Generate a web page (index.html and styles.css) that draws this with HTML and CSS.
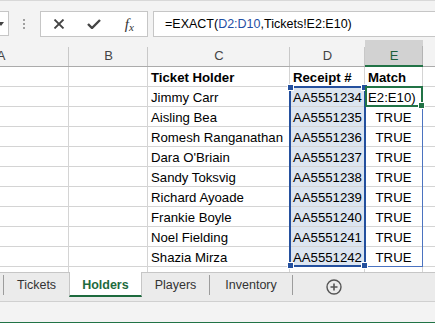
FILE: index.html
```html
<!DOCTYPE html>
<html lang="en">
<head>
    <meta charset="UTF-8">
    <meta name="viewport" content="width=device-width, initial-scale=1.0">
    <title>Holders - Excel</title>
    <link rel="stylesheet" href="styles.css">
</head>
<body>
    <!-- Formula bar -->
    <div class="formula-bar">
        <div class="name-box">
            <svg width="6" height="4" viewBox="0 0 6 4"><path d="M0 0 L6 0 L3 4 Z" fill="#444"/></svg>
        </div>
        <div class="grip"><span></span><span></span><span></span></div>
        <div class="fx-buttons">
            <span class="fx-btn">
                <svg width="12" height="10" viewBox="0 0 12 10"><path d="M1.5 0.5 L10.5 9.5 M10.5 0.5 L1.5 9.5" stroke="#444" stroke-width="1.8" fill="none"/></svg>
            </span>
            <span class="fx-btn">
                <svg width="14" height="10" viewBox="0 0 14 10"><path d="M1 5 L5 9 L13 1" stroke="#444" stroke-width="2.4" fill="none"/></svg>
            </span>
            <span class="fx-btn fx-label"><i>f</i><span>x</span></span>
        </div>
        <div class="formula-input">=EXACT(<span class="ref-text">D2:D10</span>,Tickets!E2:E10)</div>
    </div>

    <!-- Sheet grid -->
    <div class="sheet">
        <div class="hd">A</div>
        <div class="hd">B</div>
        <div class="hd">C</div>
        <div class="hd">D</div>
        <div class="hd sel">E</div>
        <div class="hd"></div>

        <div class="c"></div><div class="c"></div><div class="c b">Ticket Holder</div><div class="c b">Receipt #</div><div class="c b">Match</div><div class="c"></div>
        <div class="c"></div><div class="c"></div><div class="c">Jimmy Carr</div><div class="c ref">AA5551234</div><div class="c">E2:E10)</div><div class="c"></div>
        <div class="c"></div><div class="c"></div><div class="c">Aisling Bea</div><div class="c ref">AA5551235</div><div class="c ctr">TRUE</div><div class="c"></div>
        <div class="c"></div><div class="c"></div><div class="c">Romesh Ranganathan</div><div class="c ref">AA5551236</div><div class="c ctr">TRUE</div><div class="c"></div>
        <div class="c"></div><div class="c"></div><div class="c">Dara O'Briain</div><div class="c ref">AA5551237</div><div class="c ctr">TRUE</div><div class="c"></div>
        <div class="c"></div><div class="c"></div><div class="c">Sandy Toksvig</div><div class="c ref">AA5551238</div><div class="c ctr">TRUE</div><div class="c"></div>
        <div class="c"></div><div class="c"></div><div class="c">Richard Ayoade</div><div class="c ref">AA5551239</div><div class="c ctr">TRUE</div><div class="c"></div>
        <div class="c"></div><div class="c"></div><div class="c">Frankie Boyle</div><div class="c ref">AA5551240</div><div class="c ctr">TRUE</div><div class="c"></div>
        <div class="c"></div><div class="c"></div><div class="c">Noel Fielding</div><div class="c ref">AA5551241</div><div class="c ctr">TRUE</div><div class="c"></div>
        <div class="c"></div><div class="c"></div><div class="c">Shazia Mirza</div><div class="c ref">AA5551242</div><div class="c ctr">TRUE</div><div class="c"></div>
        <div class="c"></div><div class="c"></div><div class="c"></div><div class="c"></div><div class="c"></div><div class="c"></div>

        <!-- Range outlines drawn over the cells -->
        <div class="range-outline"></div>
        <div class="ref-range">
            <span class="handle tl"></span><span class="handle tr"></span>
            <span class="handle bl"></span><span class="handle br"></span>
        </div>
        <div class="active-cell"><span class="fill-handle"></span></div>
    </div>

    <!-- Sheet tabs -->
    <div class="tabs">
        <div class="tab first">Tickets</div>
        <div class="tab active">Holders</div>
        <div class="tab">Players</div>
        <div class="tab wide">Inventory</div>
        <div class="add-sheet">
            <svg width="16" height="16" viewBox="0 0 16 16"><circle cx="8" cy="8" r="7" stroke="#555" stroke-width="1.4" fill="none"/><path d="M8 4.5 V11.5 M4.5 8 H11.5" stroke="#555" stroke-width="1.6"/></svg>
        </div>
    </div>

    <div class="status-bar"></div>
</body>
</html>
```

FILE: styles.css
```css
/* Excel-like sheet view */
body {
    margin: 0;
    width: 435px;
    height: 323px;
    overflow: hidden;
    background: #fff;
    font-family: "Liberation Sans", Arial, sans-serif;
    color: #000;
}

/* ---- formula bar ---- */
.formula-bar {
    display: flex;
    align-items: flex-start;
    height: 40px;
    padding-top: 11px;
    box-sizing: border-box;
    background: #f3f3f3;
    border-top: 1px solid #d8d8d8;
}

.name-box {
    width: 9px;
    height: 25px;
    box-sizing: border-box;
    margin-top: -1px;
    background: #fff;
    border: 1px solid #c6c6c6;
    border-left: none;
    display: flex;
    align-items: center;
}

.name-box svg {
    margin-left: -2px;
}

.grip {
    display: flex;
    flex-direction: column;
    gap: 2px;
    margin: 7px 0 0 14px;
}

.grip span {
    width: 2px;
    height: 2px;
    background: #a0a0a0;
}

.fx-buttons {
    display: flex;
    width: 108px;
    height: 26px;
    box-sizing: border-box;
    margin-top: -1px;
    margin-left: 15px;
    background: #fff;
    border: 1px solid #c6c6c6;
}

.fx-btn {
    flex: 1;
    display: flex;
    align-items: center;
    justify-content: center;
}

.fx-label {
    font-family: "Liberation Serif", serif;
    color: #333;
    font-size: 15px;
    padding-top: 1px;
}

.fx-label span {
    font-size: 11px;
    font-style: italic;
    margin-top: 4px;
}

.formula-input {
    flex: 1;
    height: 26px;
    box-sizing: border-box;
    margin-top: -1px;
    margin-left: 5px;
    margin-right: -2px;
    padding: 5px 0 0 11px;
    background: #fff;
    border: 1px solid #c6c6c6;
    font-size: 12.5px;
    white-space: nowrap;
}

.ref-text {
    color: #1f4ea3;
}

/* ---- grid ---- */
.sheet {
    position: relative;
    display: grid;
    grid-template-columns: 136px 79px 142px 75px 58px 100px;
    grid-template-rows: 27px repeat(11, 20px);
    height: 232px;
    margin-left: -67px;
    overflow: hidden;
}

.hd {
    box-sizing: border-box;
    padding-top: 6px;
    line-height: 20px;
    text-align: center;
    font-size: 13px;
    color: #444;
    background: linear-gradient(#c8c8c8, #c8c8c8) right bottom / 1px 19px no-repeat, #f3f3f3;
    border-bottom: 1px solid #ababab;
}

.hd.sel {
    background: linear-gradient(#b4b4b4, #b4b4b4) right bottom / 1px 19px no-repeat, #d2d2d2;
    color: #1d5e3b;
    border-bottom: 2px solid #217346;
}

.c {
    box-sizing: border-box;
    padding: 3px 3px 0;
    line-height: 16px;
    font-size: 13.2px;
    white-space: nowrap;
    overflow: hidden;
    border-right: 1px solid #d4d4d4;
    border-bottom: 1px solid #d4d4d4;
}

.c.b {
    font-weight: bold;
}

.c.ctr {
    text-align: center;
}

.c.ref {
    background: #dce5f0;
}

.range-outline {
    position: absolute;
    grid-column: 5 / 6;
    grid-row: 3 / 12;
    inset: -1px 0 0 -1px;
    border: 1px solid #4b73c0;
}

.ref-range {
    position: absolute;
    grid-column: 4 / 5;
    grid-row: 3 / 12;
    inset: -1px -1px 0 -1px;
    border: 2px solid #24509e;
}

.handle {
    position: absolute;
    width: 5px;
    height: 5px;
    background: #24509e;
    border: 1px solid #fff;
}

.handle.tl { left: -4px; top: -4px; }
.handle.tr { right: -4px; top: -4px; }
.handle.bl { left: -4px; bottom: -4px; }
.handle.br { right: -4px; bottom: -4px; }

.active-cell {
    position: absolute;
    grid-column: 5 / 6;
    grid-row: 3 / 4;
    inset: -1px 0 0 0;
    border: 2px solid #217346;
}

.fill-handle {
    position: absolute;
    right: -4px;
    bottom: -4px;
    width: 5px;
    height: 5px;
    background: #217346;
    border: 1px solid #fff;
}

/* ---- sheet tabs ---- */
.tabs {
    display: flex;
    align-items: flex-start;
    height: 28px;
    padding-left: 3px;
    background: #ebebeb;
    border-top: 1px solid #c6c6c6;
    border-bottom: 1px solid #d0d0d0;
}

.tab {
    margin-top: 2px;
    height: 20px;
    padding: 0 13px;
    line-height: 20px;
    font-size: 12.5px;
    color: #333;
    border-right: 1px solid #9c9c9c;
}

.tab.first {
    border-left: 1px solid #9c9c9c;
}

.tab.wide {
    padding: 0 15px;
}

.tab.active {
    margin-top: -1px;
    margin-left: -1px;
    height: 25px;
    padding: 0 12px;
    line-height: 26px;
    box-sizing: border-box;
    background: #fff;
    color: #1d6b3e;
    font-weight: bold;
    border-left: 1px solid #c6c6c6;
    border-right: 1px solid #c6c6c6;
    border-bottom: 2px solid #1d6b3e;
}

.add-sheet {
    display: flex;
    margin: 6px 0 0 33px;
}

.status-bar {
    height: 20px;
    background: #f3f3f3;
    border-bottom: 2px solid #217346;
}
```
